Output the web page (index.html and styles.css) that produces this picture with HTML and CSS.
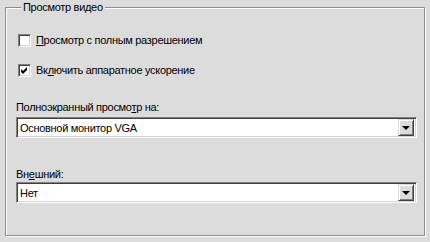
FILE: index.html
```html
<html lang="ru">
  <head>
    <meta charset="utf-8"/>
    <title>Просмотр видео</title>
    <link rel="stylesheet" href="styles.css">
  </head>
  <body>
    <fieldset class="group">
      <legend>Просмотр видео</legend>
      <div class="check-row first">
        <span class="check"></span>
        <span class="check-label"><u>П</u>росмотр с полным разрешением</span>
      </div>
      <div class="check-row">
        <span class="check checked">
          <svg width="7" height="7" viewBox="0 0 7 7"><path d="M0 2 L2 4 L6 0 L6 3 L2 7 L0 5 Z" fill="#000"/></svg>
        </span>
        <span class="check-label">Вк<u>л</u>ючить аппаратное ускорение</span>
      </div>
      <div class="field-label first-field">Полноэкранный просмо<u>т</u>р на:</div>
      <div class="combo">
        <span class="combo-text">Основной монитор VGA</span>
        <span class="combo-btn"><span class="arrow"></span></span>
      </div>
      <div class="field-label second-field">Вн<u>е</u>шний:</div>
      <div class="combo">
        <span class="combo-text">Нет</span>
        <span class="combo-btn"><span class="arrow"></span></span>
      </div>
    </fieldset>
  </body>
</html>
```
FILE: styles.css
```css
* {
  font-family: "Liberation Sans", Arial, sans-serif;
  font-size: 11px;
  letter-spacing: -0.3px;
  box-sizing: border-box;
}
body {
  margin: 0;
  width: 430px;
  height: 242px;
  background-color: #dcdcdc;
  color: #000;
  overflow: hidden;
}
.group {
  margin: 0 0 0 5px;
  padding: 0 0 0 10px;
  width: 420px;
  height: 236px;
  border: 1px solid #8c8c8c;
  box-shadow: 1px 1px 0 #fff, inset 1px 1px 0 #fff;
}
.group legend {
  margin-left: 5px;
  padding: 0 2px;
  line-height: 14px;
  background-color: #dcdcdc;
}
.check-row {
  display: flex;
  align-items: center;
  height: 13px;
  margin-left: 2px;
}
.check-row.first {
  margin-top: 20px;
}
.check-row + .check-row {
  margin-top: 17px;
}
.check {
  display: flex;
  align-items: center;
  justify-content: center;
  width: 13px;
  height: 13px;
  background-color: #fff;
  border-top: 1px solid #808080;
  border-left: 1px solid #808080;
  border-right: 1px solid #fff;
  border-bottom: 1px solid #fff;
  box-shadow: inset 1px 1px 0 #404040, inset -1px -1px 0 #d4d4d4;
}
.check-label {
  margin-left: 5px;
  line-height: 13px;
}
.field-label {
  line-height: 13px;
}
.first-field {
  margin-top: 24px;
}
.second-field {
  margin-top: 30px;
}
.combo {
  display: flex;
  align-items: center;
  justify-content: space-between;
  width: 401px;
  height: 21px;
  margin-top: 3px;
  padding: 2px;
  background-color: #fff;
  border-top: 1px solid #808080;
  border-left: 1px solid #808080;
  border-right: 1px solid #fff;
  border-bottom: 1px solid #fff;
  box-shadow: inset 1px 1px 0 #404040, inset -1px -1px 0 #d4d4d4;
}
.second-field + .combo {
  margin-top: 1px;
}
.combo-text {
  padding-left: 1px;
}
.combo-btn {
  display: flex;
  align-items: center;
  justify-content: center;
  width: 16px;
  height: 17px;
  background-color: #dcdcdc;
  border-top: 1px solid #dcdcdc;
  border-left: 1px solid #dcdcdc;
  border-right: 1px solid #404040;
  border-bottom: 1px solid #404040;
  box-shadow: inset 1px 1px 0 #fff, inset -1px -1px 0 #808080;
}
.arrow {
  width: 0;
  height: 0;
  border-left: 4px solid transparent;
  border-right: 4px solid transparent;
  border-top: 4px solid #000;
}
```
